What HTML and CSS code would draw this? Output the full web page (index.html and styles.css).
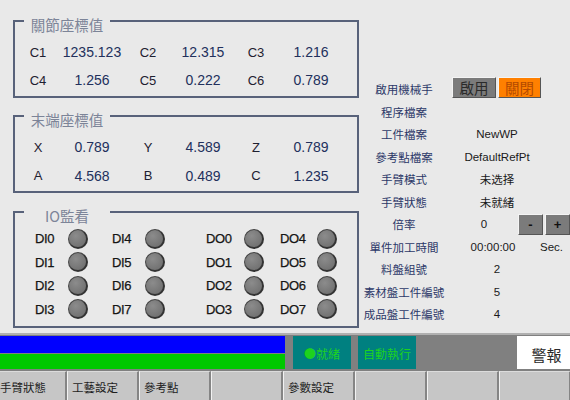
FILE: index.html
```html
<!DOCTYPE html>
<html lang="zh-Hant">
<head>
<meta charset="utf-8">
<title>HMI</title>
<link rel="stylesheet" href="styles.css">
</head>
<body>
<div class="screen">
  <div class="main">
    <div class="left">
      <fieldset class="group g1">
        <legend><span class="lg">關節座標值</span></legend>
        <div class="coords">
          <span class="lab">C1</span><span class="val">1235.123</span>
          <span class="lab">C2</span><span class="val">12.315</span>
          <span class="lab">C3</span><span class="val">1.216</span>
          <span class="lab">C4</span><span class="val">1.256</span>
          <span class="lab">C5</span><span class="val">0.222</span>
          <span class="lab">C6</span><span class="val">0.789</span>
        </div>
      </fieldset>
      <fieldset class="group g2">
        <legend><span class="lg">末端座標值</span></legend>
        <div class="coords">
          <span class="lab">X</span><span class="val">0.789</span>
          <span class="lab">Y</span><span class="val">4.589</span>
          <span class="lab">Z</span><span class="val">0.789</span>
          <span class="lab">A</span><span class="val">4.568</span>
          <span class="lab">B</span><span class="val">0.489</span>
          <span class="lab">C</span><span class="val">1.235</span>
        </div>
      </fieldset>
      <fieldset class="group g3">
        <legend><span class="lg">IO監看</span></legend>
        <div class="io">
          <span class="io-l">DI0</span><span class="led"></span><span></span><span class="io-l">DI4</span><span class="led"></span><span></span><span class="io-l">DO0</span><span class="led"></span><span></span><span class="io-l">DO4</span><span class="led"></span>
          <span class="io-l">DI1</span><span class="led"></span><span></span><span class="io-l">DI5</span><span class="led"></span><span></span><span class="io-l">DO1</span><span class="led"></span><span></span><span class="io-l">DO5</span><span class="led"></span>
          <span class="io-l">DI2</span><span class="led"></span><span></span><span class="io-l">DI6</span><span class="led"></span><span></span><span class="io-l">DO2</span><span class="led"></span><span></span><span class="io-l">DO6</span><span class="led"></span>
          <span class="io-l">DI3</span><span class="led"></span><span></span><span class="io-l">DI7</span><span class="led"></span><span></span><span class="io-l">DO3</span><span class="led"></span><span></span><span class="io-l">DO7</span><span class="led"></span>
        </div>
      </fieldset>
    </div>
    <div class="right">
      <div class="row"><span class="rl">啟用機械手</span><span class="btn btn-on">啟用</span><span class="btn btn-off">關閉</span></div>
      <div class="row"><span class="rl">程序檔案</span><span class="rv"></span></div>
      <div class="row"><span class="rl">工件檔案</span><span class="rv">NewWP</span></div>
      <div class="row"><span class="rl">參考點檔案</span><span class="rv">DefaultRefPt</span></div>
      <div class="row"><span class="rl">手臂模式</span><span class="rv">未选择</span></div>
      <div class="row"><span class="rl">手臂狀態</span><span class="rv">未就緒</span></div>
      <div class="row"><span class="rl">倍率</span><span class="rv rv-rate">0</span><span class="sbtn">-</span><span class="sbtn">+</span></div>
      <div class="row"><span class="rl">單件加工時間</span><span class="rv rv-time">00:00:00</span><span class="unit">Sec.</span></div>
      <div class="row"><span class="rl">料盤組號</span><span class="rv">2</span></div>
      <div class="row"><span class="rl">素材盤工件編號</span><span class="rv">5</span></div>
      <div class="row"><span class="rl">成品盤工件編號</span><span class="rv">4</span></div>
    </div>
  </div>
  <div class="status">
    <div class="bars">
      <div class="bar-blue"></div>
      <div class="bar-green"></div>
    </div>
    <div class="st st-ready">●就緒</div>
    <div class="st st-auto">自動執行</div>
    <div class="st-fill"></div>
    <div class="alarm">警報</div>
  </div>
  <div class="tabs">
    <div class="tab">手臂狀態</div>
    <div class="tab">工藝設定</div>
    <div class="tab">參考點</div>
    <div class="tab"></div>
    <div class="tab">參數設定</div>
    <div class="tab"></div>
    <div class="tab"></div>
    <div class="tab"></div>
  </div>
</div>
</body>
</html>
```
FILE: styles.css
```css
* { box-sizing: border-box; }
html, body { margin: 0; padding: 0; }
body {
  background: #e9e9e9;
  font-family: "Liberation Sans", "Noto Sans CJK TC", sans-serif;
}
.screen {
  width: 570px;
  height: 400px;
  overflow: hidden;
  background: #e9e9e9;
}
.main {
  height: 333px;
  display: flex;
}
.left {
  width: 362px;
  padding: 9px 0 0 13px;
  flex: none;
}
.group {
  width: 346px;
  margin: 0;
  padding: 0;
  border: 2px solid #58627a;
  min-width: 0;
}
.group legend {
  width: 86px;
  margin-left: 9px;
  padding: 8px 0 0;
  text-align: left;
}
.lg {
  display: block;
  text-align: center;
  font-family: "Noto Sans CJK TC", "Liberation Sans", sans-serif;
  font-size: 14.5px;
  line-height: 16px;
  color: #7c8498;
}
.g1 { padding: 5px 0 2px; }
.g2 { margin-top: 6px; padding: 5px 0 1px; }
.g3 { margin-top: 7px; padding: 3px 0 5px; }
.coords {
  display: grid;
  grid-template-columns: 46px 62px 50px 60px 46px 64px;
  grid-auto-rows: 28px;
  align-items: center;
  text-align: center;
}
.g2 .coords { grid-auto-rows: 28.5px; }
.lab {
  font-size: 13px;
  color: #1e2030;
}
.val {
  font-size: 14px;
  color: #22305c;
}
.io {
  display: grid;
  grid-template-columns: 33px 20px 24px 33px 20px 41px 38px 20px 16px 37px 20px;
  grid-auto-rows: 23.5px;
  align-items: center;
  margin-left: 20px;
}
.io-l {
  font-size: 13px;
  color: #151515;
  letter-spacing: -0.4px;
  -webkit-text-stroke: 0.25px #151515;
}
.led {
  width: 20px;
  height: 20px;
  border-radius: 50%;
  background: radial-gradient(circle at 40% 35%, #8c8c8c 0%, #777 60%, #6a6a6a 100%);
  border: 1px solid #444;
  border-right: 2px solid #333;
  border-bottom: 2px solid #333;
}
.right {
  flex: 1;
  padding-top: 78px;
  display: flex;
  flex-direction: column;
}
.row {
  height: 22.5px;
  display: flex;
  align-items: center;
  font-size: 11.5px;
}
.rl {
  width: 84px;
  text-align: center;
  color: #2c3868;
  font-family: "Noto Sans CJK TC", "Liberation Sans", sans-serif;
  white-space: nowrap;
}
.rv {
  width: 102px;
  text-align: center;
  color: #1a1a1a;
  font-family: "Liberation Sans", "Noto Sans CJK TC", sans-serif;
}
.rv-rate {
  width: 72px;
  padding-left: 4px;
}
.rv-time { width: 94px; }
.unit { color: #1a1a1a; }
.btn {
  height: 21px;
  margin-top: -3px;
  display: flex;
  align-items: center;
  justify-content: center;
  font-size: 14.5px;
  font-family: "Noto Sans CJK TC", sans-serif;
  border-top: 1px solid #f4f4f4;
  border-left: 1px solid #f4f4f4;
  border-right: 1px solid #555;
  border-bottom: 1px solid #555;
}
.btn-on {
  width: 44px;
  margin-left: 6px;
  background: #7b7b7b;
  color: #2a2a2a;
}
.btn-off {
  width: 43px;
  margin-left: 2px;
  background: #ff8000;
  color: #b34a00;
}
.sbtn {
  width: 25px;
  height: 21px;
  margin-right: 2px;
  display: flex;
  align-items: center;
  justify-content: center;
  background: #7b7b7b;
  color: #111;
  font-size: 13px;
  font-weight: bold;
  border-top: 1px solid #f4f4f4;
  border-left: 1px solid #f4f4f4;
  border-right: 1px solid #555;
  border-bottom: 1px solid #555;
}
.status {
  height: 38px;
  display: flex;
  background: #808080;
  border-top: 2px solid #b0b0b0;
  padding: 1px 0 2px;
}
.bars {
  width: 285px;
  display: flex;
  flex-direction: column;
  gap: 1px;
}
.bar-blue { height: 17px; background: #0000ff; }
.bar-green { height: 15px; background: #00c800; }
.st {
  width: 58px;
  background: #008080;
  color: #1ed21e;
  font-family: "Noto Sans CJK TC", sans-serif;
  font-size: 12px;
  display: flex;
  align-items: center;
  justify-content: center;
  padding-top: 2px;
}
.st-ready { margin-left: 8px; }
.st-auto { margin-left: 7px; }
.st-fill { flex: 1; }
.alarm {
  width: 53px;
  background: #fff;
  color: #2a2a2a;
  font-family: "Noto Sans CJK TC", sans-serif;
  font-size: 15px;
  display: flex;
  align-items: center;
  justify-content: center;
  padding: 4px 0 0 6px;
}
.tabs {
  height: 29px;
  display: flex;
  margin-left: -5px;
  background: #b8b8b8;
}
.tab {
  width: 72px;
  flex: none;
  background: #c6c6c6;
  border-top: 1px solid #dcdcdc;
  border-left: 1px solid #f2f2f2;
  border-right: 2px solid #858585;
  padding: 7px 0 0 4px;
  font-family: "Noto Sans CJK TC", sans-serif;
  font-size: 11.5px;
  color: #1e1e1e;
  white-space: nowrap;
}
```
